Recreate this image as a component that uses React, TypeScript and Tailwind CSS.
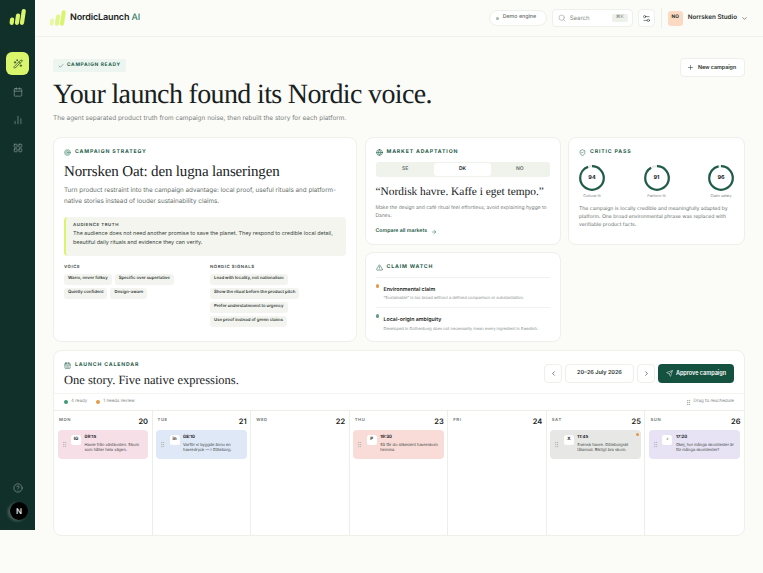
import React from "react";
import { WandSparkles, Calendar, ChartNoAxesColumn, LayoutGrid, CircleHelp, Search, Settings2, ChevronDown, Plus, Check, ArrowRight, ShieldCheck, Globe, Target, TriangleAlert, CalendarDays, ChevronLeft, ChevronRight, Send, GripVertical } from "lucide-react";

const serif = "font-['Liberation_Serif',serif]";

function Bars({ className, fade, width }: { className: string; fade?: boolean; width: number }) {
  return (
    <svg viewBox="0 0 17 16" className={className} fill="none" stroke="currentColor" strokeWidth={width} strokeLinecap="round">
      <path d="M2.700 13.800 L3.100 10.500" opacity={fade ? 0.55 : 1} />
      <path d="M8 13.800 L9 6.500" opacity={fade ? 0.8 : 1} />
      <path d="M13 13.800 L14.700 2.200" />
    </svg>
  );
}

function Label({ icon, children }: { icon: React.ReactNode; children: React.ReactNode }) {
  return (
    <div className="flex items-center gap-[4px] text-[5.200px] font-bold tracking-[0.16em] text-[#1f5c4a] uppercase leading-[8px]">
      {icon}
      <span>{children}</span>
    </div>
  );
}

function Chip({ children }: { children: React.ReactNode }) {
  return <span className="rounded-[3px] bg-[#f3f4ef] px-[4px] h-[11px] flex items-center text-[4.250px] font-semibold text-[#2c3531] whitespace-nowrap">{children}</span>;
}

function Ring({ value, label }: { value: number; label: string }) {
  const c = 2 * Math.PI * 11.8;
  return (
    <div className="flex flex-col items-center w-[26px]">
      <div className="relative w-[26px] h-[26px]">
        <svg viewBox="0 0 26 26" className="w-[26px] h-[26px] -rotate-90">
          <circle cx="13" cy="13" r="11.800" fill="none" stroke="#e9ebe5" strokeWidth="2.200" />
          <circle cx="13" cy="13" r="11.800" fill="none" stroke="#1f5c4a" strokeWidth="2.200" strokeDasharray={`${(c * value) / 100} ${c}`} />
        </svg>
        <span className="absolute inset-0 flex items-center justify-center text-[5.500px] font-bold text-[#17211d]">{value}</span>
      </div>
      <span className="mt-[3px] text-[3.600px] leading-[5px] text-[#7b837f] whitespace-nowrap">{label}</span>
    </div>
  );
}

function Post({ bg, badge, time, text, dot }: { bg: string; badge: string; time: string; text: string; dot?: boolean }) {
  return (
    <div className={`relative mt-[4px] h-[29px] rounded-[4px] ${bg} flex items-start pl-[3px] pr-[3px] pt-[5px]`}>
      <GripVertical className="w-[7px] h-[7px] mt-[6px] text-[#a9aeab] shrink-0" strokeWidth={1.5} />
      <span className="ml-[3.500px] w-[10px] h-[10px] rounded-[2.500px] bg-white shrink-0 flex items-center justify-center text-[4.500px] font-bold text-[#17211d]">{badge}</span>
      <div className="ml-[3.500px] min-w-0">
        <div className="text-[4.300px] leading-[6px] font-bold text-[#17211d]">{time}</div>
        <div className="mt-[1px] text-[4px] leading-[5.300px] text-[#3a4440]">{text}</div>
      </div>
      {dot && <span className="absolute right-[2px] top-[3px] w-[3px] h-[3px] rounded-full bg-[#e39a4b]" />}
    </div>
  );
}

function Day({ d, n, children, last }: { d: string; n: number; children?: React.ReactNode; last?: boolean }) {
  return (
    <div className={`px-[3.500px] pt-[6px] ${last ? "" : "border-r border-[#eceee8]"}`}>
      <div className="flex items-center justify-between pl-[1.500px] h-[9px]">
        <span className="text-[4.200px] font-semibold tracking-[0.14em] text-[#68716c]">{d}</span>
        <span className="text-[7.500px] font-semibold text-[#1c2622]">{n}</span>
      </div>
      {children}
    </div>
  );
}

export default function App() {
  return (
    <div className="relative h-[573px] w-[763px] overflow-hidden bg-[#fbfbf7] font-['Inter',sans-serif] text-[#17211d] [text-rendering:geometricPrecision]">
      <div className="flex items-start">
        <aside className="w-[35px] h-[530px] shrink-0 bg-[#12302a] flex flex-col items-center">
          <Bars width={4.200} className="w-[17px] h-[16px] mt-[9px] text-[#d9f56b]" />
          <div className="mt-[27px] w-[23px] h-[23px] rounded-[6px] bg-[#d9f56b] flex items-center justify-center">
            <WandSparkles className="w-[10px] h-[10px] text-[#12302a]" strokeWidth={1.6} />
          </div>
          <Calendar className="mt-[12px] w-[10px] h-[10px] text-[#8da39b]" strokeWidth={1.5} />
          <ChartNoAxesColumn className="mt-[18px] w-[10px] h-[10px] text-[#8da39b]" strokeWidth={1.5} />
          <LayoutGrid className="mt-[18px] w-[10px] h-[10px] text-[#8da39b]" strokeWidth={1.5} />
          <CircleHelp className="mt-auto w-[10px] h-[10px] text-[#8da39b]" strokeWidth={1.5} />
          <div className="mt-[9px] mb-[10px] ml-[3px] w-[18px] h-[18px] rounded-full bg-black shadow-[-2px_1px_3px_rgba(255,255,255,0.25)] flex items-center justify-center text-[8px] font-medium text-white">N</div>
        </aside>
        <div className="flex-1 min-w-0">
          <header className="h-[37px] border-b border-[#f0f1ec] flex items-center pl-[14px] pr-[15px]">
            <Bars fade width={4} className="w-[17px] h-[16px] text-[#d9f56b]" />
            <span className="ml-[4px] text-[9px] font-semibold tracking-[-0.015em] text-[#17211d]">NordicLaunch <span className="font-medium text-[#3b7d69]">AI</span></span>
            <div className="ml-auto w-[58px] h-[16px] pl-[6px] rounded-full border border-[#eef0ea] bg-white flex items-center gap-[4px] text-[5.300px] font-medium text-[#68716c]">
              <span className="w-[3px] h-[3px] rounded-full bg-[#a9b3ae]" />Demo engine
            </div>
            <div className="ml-[5px] w-[81px] h-[18px] rounded-[4px] border border-[#eef0ea] bg-white flex items-center pl-[5px] pr-[4px] text-[6px] text-[#858d89]">
              <Search className="w-[8px] h-[8px] mr-[4px]" strokeWidth={1.5} />Search
              <span className="ml-auto w-[16px] justify-center h-[8px] rounded-[2px] bg-[#eef0ea] text-[4.800px] flex items-center">⌘K</span>
            </div>
            <div className="ml-[5px] w-[17px] h-[18px] rounded-[4px] border border-[#eef0ea] bg-white flex items-center justify-center">
              <Settings2 className="w-[9px] h-[9px] text-[#27312d]" strokeWidth={1.5} />
            </div>
            <div className="ml-[6px] w-px h-[20px] bg-[#eceee8]" />
            <div className="ml-[6px] w-[15px] h-[15px] rounded-[3px] bg-[#fbd9c2] flex items-center justify-center text-[4.800px] font-bold text-[#27312d]">NO</div>
            <span className="ml-[5px] text-[6.300px] font-semibold text-[#27312d]">Norrsken Studio</span>
            <ChevronDown className="ml-[4px] w-[7px] h-[7px] text-[#27312d]" strokeWidth={1.8} />
          </header>
          <main className="pl-[18px] pr-[18px]">
            <div className="flex items-start justify-between pt-[21px] h-[100px]">
              <div className="pt-[1px]">
                <div className="flex w-fit items-center gap-[3px] h-[13px] px-[5px] rounded-[2px] bg-[#ecf5f0] text-[4.900px] font-bold tracking-[0.13em] text-[#1f5c4a]">
                  <Check className="w-[6px] h-[6px]" strokeWidth={1.8} />CAMPAIGN READY
                </div>
                <h1 className={`${serif} mt-[6px] text-[28px] leading-[34px] tracking-[-0.65px] whitespace-nowrap text-[#17211d]`}>Your launch found its Nordic voice.</h1>
                <p className="mt-[1px] text-[6.450px] leading-[10px] text-[#7b837f]">The agent separated product truth from campaign noise, then rebuilt the story for each platform.</p>
              </div>
              <button className="w-[65px] h-[19px] pl-[6px] rounded-[4px] border border-[#eef0ea] bg-white flex items-center gap-[4px] text-[5.300px] font-semibold text-[#27312d]">
                <Plus className="w-[7px] h-[7px]" strokeWidth={1.8} />New campaign
              </button>
            </div>
            <div className="grid grid-cols-[304px_196px_177px] grid-rows-[108px_90px] gap-x-[7.500px] gap-y-[7px]">
              <section className="row-span-2 rounded-[8px] border border-[#eef0ea] bg-white pt-[10px] px-[10px]">
                <Label icon={<Target className="w-[7px] h-[7px] text-[#5f9c88]" strokeWidth={2.500} />}>Campaign strategy</Label>
                <h2 className={`${serif} mt-[6px] text-[15px] leading-[20px] tracking-[-0.01em] text-[#17211d]`}>Norrsken Oat: den lugna lanseringen</h2>
                <p className="mt-[3px] text-[6.300px] leading-[11px] text-[#68716c]">Turn product restraint into the campaign advantage: local proof, useful rituals and platform-native stories instead of louder sustainability claims.</p>
                <div className="mt-[10px] h-[39px] rounded-[4px] border-l-2 border-[#d9f56b] bg-[#f3f5ee] pl-[7px] pt-[6px]">
                  <div className="text-[4.300px] leading-[6px] font-bold tracking-[0.13em] text-[#4e5853]">AUDIENCE TRUTH</div>
                  <p className="mt-[1px] text-[5.400px] leading-[8.500px] text-[#3a4440]">The audience does not need another promise to save the planet. They respond to credible local detail, beautiful daily rituals and evidence they can verify.</p>
                </div>
                <div className="mt-[9px] flex">
                  <div className="w-[146px]">
                    <div className="text-[4.300px] leading-[6px] font-bold tracking-[0.13em] text-[#4e5853]">VOICE</div>
                    <div className="mt-[3px] flex flex-wrap gap-x-[3px] gap-y-[3px]">
                      <Chip>Warm, never folksy</Chip><Chip>Specific over superlative</Chip><Chip>Quietly confident</Chip><Chip>Design-aware</Chip>
                    </div>
                  </div>
                  <div>
                    <div className="text-[4.300px] leading-[6px] font-bold tracking-[0.13em] text-[#4e5853]">NORDIC SIGNALS</div>
                    <div className="mt-[3px] flex flex-col items-start gap-y-[3px]">
                      <Chip>Lead with locality, not nationalism</Chip><Chip>Show the ritual before the product pitch</Chip><Chip>Prefer understatement to urgency</Chip><Chip>Use proof instead of green claims</Chip>
                    </div>
                  </div>
                </div>
              </section>
              <section className="rounded-[8px] border border-[#eef0ea] bg-white pt-[10px] px-[10px]">
                <Label icon={<Globe className="w-[7px] h-[7px] text-[#1f5c4a]" strokeWidth={2} />}>Market adaptation</Label>
                <div className="mt-[6px] h-[15px] rounded-[3px] bg-[#f0f2ec] grid grid-cols-3 p-[1px] text-[5px] font-semibold text-[#68716c]">
                  <span className="flex items-center justify-center">SE</span>
                  <span className="flex items-center justify-center rounded-[3px] bg-white text-[#17211d]">DK</span>
                  <span className="flex items-center justify-center">NO</span>
                </div>
                <div className={`${serif} mt-[7px] text-[11.400px] leading-[16px] text-[#17211d] whitespace-nowrap`}>“Nordisk havre. Kaffe i eget tempo.”</div>
                <p className="mt-[4px] text-[5px] leading-[8px] text-[#7b837f]">Make the design and café ritual feel effortless; avoid explaining hygge to Danes.</p>
                <div className="mt-[8px] flex items-center gap-[4px] text-[5.200px] font-semibold text-[#1f5c4a]">Compare all markets <ArrowRight className="w-[6px] h-[6px]" strokeWidth={1.8} /></div>
              </section>
              <section className="rounded-[8px] border border-[#eef0ea] bg-white pt-[10px] px-[10px]">
                <Label icon={<ShieldCheck className="w-[7px] h-[7px] text-[#1f5c4a]" strokeWidth={1.8} />}>Critic pass</Label>
                <div className="mt-[9px] flex justify-between">
                  <Ring value={94} label="Cultural fit" /><Ring value={91} label="Platform fit" /><Ring value={96} label="Claim safety" />
                </div>
                <p className="mt-[6px] text-[5.100px] leading-[8px] text-[#68716c]">The campaign is locally credible and meaningfully adapted by platform. One broad environmental phrase was replaced with verifiable product facts.</p>
              </section>
              <section className="rounded-[8px] border border-[#eef0ea] bg-white pt-[10px] px-[10px]">
                <Label icon={<TriangleAlert className="w-[7px] h-[7px] text-[#1f5c4a]" strokeWidth={1.8} />}>Claim watch</Label>
                <div className="mt-[6px] border-t border-[#f1f2ee] h-[30px] pt-[8px] relative">
                  <span className="absolute left-0 top-[6px] w-[3.500px] h-[3.500px] rounded-full bg-[#e39a4b]" />
                  <div className="pl-[8px] text-[5.300px] leading-[8px] font-semibold text-[#1c2622]">Environmental claim</div>
                  <div className="pl-[8px] mt-[1px] text-[4px] leading-[6px] text-[#858d89] whitespace-nowrap">"Sustainable" is too broad without a defined comparison or substantiation.</div>
                </div>
                <div className="border-t border-[#f1f2ee] pt-[8px] relative">
                  <span className="absolute left-0 top-[6px] w-[3.500px] h-[3.500px] rounded-full bg-[#5f9c88]" />
                  <div className="pl-[8px] text-[5.300px] leading-[8px] font-semibold text-[#1c2622]">Local-origin ambiguity</div>
                  <div className="pl-[8px] mt-[2px] text-[4px] leading-[6px] text-[#858d89] whitespace-nowrap">Developed in Gothenburg does not necessarily mean every ingredient is Swedish.</div>
                </div>
              </section>
            </div>
            <section className="mt-[8px] h-[186px] rounded-[8px] border border-[#eef0ea] bg-white overflow-hidden">
              <div className="h-[43px] flex items-start justify-between px-[10px] border-b border-[#f4f5f1]">
                <div className="pt-[10px]">
                  <Label icon={<CalendarDays className="w-[7px] h-[7px] text-[#1f5c4a]" strokeWidth={1.8} />}>Launch calendar</Label>
                  <h2 className={`${serif} mt-[2px] text-[12.500px] leading-[18px] text-[#17211d]`}>One story. Five native expressions.</h2>
                </div>
                <div className="flex items-center gap-[3px] pt-[13px]">
                  <div className="w-[18px] h-[19px] rounded-[4px] border border-[#eef0ea] flex items-center justify-center"><ChevronLeft className="w-[7px] h-[7px]" strokeWidth={2} /></div>
                  <div className="w-[69px] h-[19px] rounded-[4px] border border-[#eef0ea] flex items-center justify-center text-[5.500px] font-semibold text-[#27312d]">20–26 July 2026</div>
                  <div className="w-[18px] h-[19px] rounded-[4px] border border-[#eef0ea] flex items-center justify-center"><ChevronRight className="w-[7px] h-[7px]" strokeWidth={2} /></div>
                  <button className="w-[76px] h-[19px] rounded-[4px] bg-[#15513f] flex items-center justify-center gap-[3px] text-[5.500px] font-semibold text-white"><Send className="w-[7px] h-[7px]" strokeWidth={1.6} />Approve campaign</button>
                </div>
              </div>
              <div className="h-[17px] flex items-center px-[10px] border-b border-[#eceee8] text-[4.500px] text-[#858d89]">
                <span className="w-[3.500px] h-[3.500px] rounded-full bg-[#3f9a78] mr-[3.500px]" />4 ready
                <span className="ml-[9px] w-[3.500px] h-[3.500px] rounded-full bg-[#e39a4b] mr-[3.500px]" />1 needs review
                <GripVertical className="ml-auto w-[7px] h-[7px] mr-[2px]" strokeWidth={1.5} />Drag to reschedule
              </div>
              <div className="grid grid-cols-7 h-[125px]">
                <Day d="MON" n={20}><Post bg="bg-[#f7dfe8]" badge="IG" time="09:15" text="Havre från västkusten. Skum som håller hela vägen." /></Day>
                <Day d="TUE" n={21}><Post bg="bg-[#dfe8f7]" badge="in" time="08:10" text="Varför vi byggde ännu en havredryck — i Göteborg." /></Day>
                <Day d="WED" n={22} />
                <Day d="THU" n={23}><Post bg="bg-[#f9dcd8]" badge="P" time="19:30" text="Så får du silkeslent havreskum hemma" /></Day>
                <Day d="FRI" n={24} />
                <Day d="SAT" n={25}><Post bg="bg-[#e7e8e6]" badge="X" time="11:45" text="Svensk havre. Göteborgskt tålamod. Riktigt bra skum." dot /></Day>
                <Day d="SUN" n={26} last><Post bg="bg-[#e7e3f4]" badge="♪" time="17:20" text="Okej, hur många skumtester är för många skumtester?" /></Day>
              </div>
            </section>
          </main>
        </div>
      </div>
    </div>
  );
}
